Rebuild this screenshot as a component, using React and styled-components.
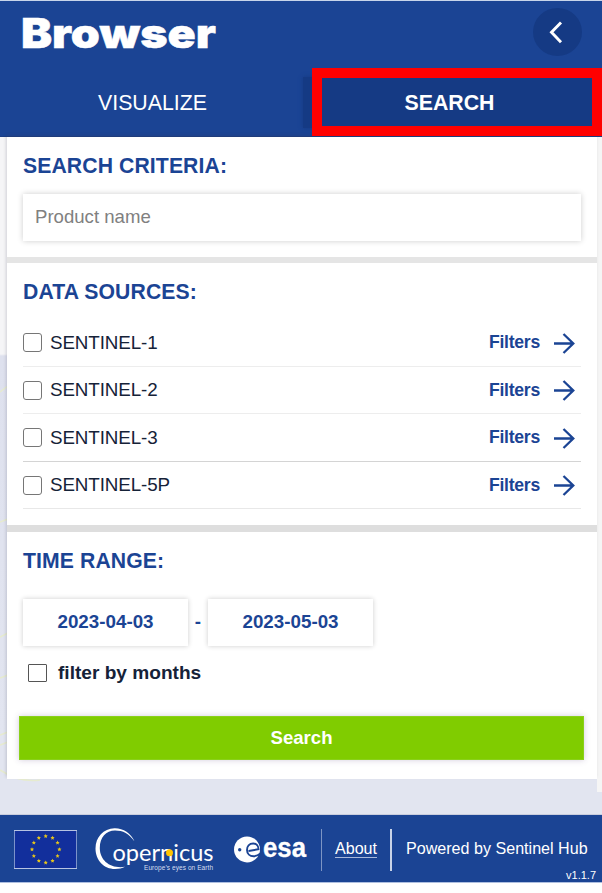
import React from 'react';
import styled, { createGlobalStyle } from 'styled-components';

const Global = createGlobalStyle`
  * { box-sizing: border-box; }
  body {
    margin: 0;
    background: #fff;
    font-family: "Liberation Sans", Arial, sans-serif;
    color: #152238;
  }
  h1, h2 { margin: 0; }
`;

const Page = styled.div`
  position: relative;
  width: 602px;
  height: 893px;
  overflow: hidden;
  display: flex;
  flex-direction: column;
`;

const Header = styled.header`
  height: 137px;
  flex: none;
  background: #1b4494;
  border-top: 1px solid #c8d5ea;
  border-bottom: 1px solid #1a3d84;
`;

const TitleBar = styled.div`
  height: 76px;
  display: flex;
  justify-content: space-between;
  padding: 7px 20px 0 21px;
`;

const Title = styled.h1`
  font: 900 41px/50px Inter, sans-serif;
  letter-spacing: 0;
  color: #fff;
  -webkit-text-stroke: 0.5px #fff;
  transform: scaleX(1.135);
  transform-origin: left;
`;

const CollapseButton = styled.button`
  width: 49px;
  height: 48px;
  padding: 0;
  border: 0;
  border-radius: 50%;
  background: #153a84;
`;

const Tabs = styled.nav`
  display: grid;
  grid-template-columns: 303px 1fr;
  height: 51px;
`;

const Tab = styled.div`
  display: flex;
  align-items: center;
  justify-content: center;
  padding: ${(p) => (p.$active ? '1px 6px 0 0' : '1px 0 0 2px')};
  font-size: 21.3px;
  font-weight: ${(p) => (p.$active ? 700 : 400)};
  color: #fff;
  background: ${(p) => (p.$active ? '#153a84' : 'transparent')};
  box-shadow: ${(p) => (p.$active ? '0 0 4px #153a84' : 'none')};
`;

const Highlight = styled.div`
  position: absolute;
  left: 312px;
  top: 68px;
  width: 290px;
  height: 68px;
  border: 10px solid #ff0000;
`;

const Body = styled.main`
  position: relative;
  flex: none;
  height: 678px;
  padding: 0 5px 0 7px;
  border-bottom: 1px solid #c9cddd;
  background: linear-gradient(#f5f5f7 0 217px, #dee1ee 219px, #e2e5f0 600px);
`;

const Backdrop = styled.svg`
  position: absolute;
  left: 0;
  top: 0;
`;

const RightRail = styled.div`
  position: absolute;
  right: 0;
  top: 0;
  width: 5px;
  height: 655px;
  background: #f5f5f5;
`;

const Panels = styled.div`
  position: relative;
  display: flex;
  flex-direction: column;
  box-shadow: -1px -2px 3px rgba(60, 60, 80, 0.2);
`;

const Panel = styled.section`
  height: ${(p) => p.$height}px;
  padding: ${(p) => p.$top}px 16px 0;
  background: #fff;
  border-bottom: ${(p) => p.$gap || 0}px solid ${(p) => p.$line || 'transparent'};
`;

const PanelTitle = styled.h2`
  height: 24px;
  font-size: 21.2px;
  line-height: 24px;
  letter-spacing: 0.1px;
  color: #1b4494;
`;

const SearchField = styled.input`
  display: block;
  width: 558px;
  height: 47px;
  margin-top: 16px;
  padding: 0 12px 1px;
  border: 0;
  background: #fff;
  font: 18.6px "Liberation Sans", Arial, sans-serif;
  box-shadow: 0 0 6px rgba(0, 0, 0, 0.2);
  &::placeholder { color: #808080; opacity: 1; }
`;

const SourceList = styled.div`
  margin-top: 15px;
`;

const SourceRow = styled.div`
  width: 558px;
  height: ${(p) => p.$height}px;
  display: flex;
  align-items: center;
  border-bottom: 1px solid ${(p) => p.$line};
`;

const Check = styled.span`
  width: 19px;
  height: ${(p) => (p.$square ? 18 : 19)}px;
  border: 1px solid ${(p) => (p.$square ? '#555' : '#767676')};
  border-radius: ${(p) => (p.$square ? 1 : 3)}px;
  background: #fff;
`;

const SourceName = styled.span`
  flex: 1;
  margin-left: 8px;
  font-size: 18.8px;
  letter-spacing: -0.1px;
  line-height: 22px;
`;

const Filters = styled.span`
  display: flex;
  align-items: center;
  gap: 13px;
  padding-right: 6px;
  font-size: 17.6px;
  letter-spacing: -0.25px;
  font-weight: 700;
  line-height: 22px;
  color: #1b4494;
`;

const FiltersLabel = styled.span`
  padding-bottom: 1px;
`;

const DateRow = styled.div`
  display: flex;
  align-items: center;
  height: 47px;
  margin-top: 26px;
  color: #1b4494;
  font-size: 18.8px;
  font-weight: 700;
`;

const DateField = styled.div`
  width: 165px;
  height: 47px;
  line-height: 45px;
  text-align: center;
  box-shadow: 0 0 5px rgba(0, 0, 0, 0.2);
`;

const Dash = styled.span`
  width: 20px;
  padding-bottom: 2px;
  text-align: center;
`;

const MonthRow = styled.div`
  display: flex;
  align-items: center;
  gap: 11px;
  height: 28px;
  margin: 13px 0 0 5px;
  font-size: 19.1px;
  font-weight: 700;
`;

const SearchButton = styled.button`
  display: block;
  width: 565px;
  height: 44px;
  margin: 29px 0 0 -4px;
  padding: 0;
  border: 1px solid #8ad01b;
  background: #80cc00;
  color: #fff;
  font: 700 18.6px "Liberation Sans", Arial, sans-serif;
  box-shadow: 0 0 6px rgba(80, 50, 120, 0.25);
`;

const Footer = styled.footer`
  position: relative;
  flex: none;
  height: 68px;
  display: flex;
  background: #1b4494;
  border-bottom: 1px solid #aebfe0;
  color: #fff;
  font-size: 16.1px;
`;

const Logos = styled.svg`
  flex: none;
  width: 321px;
  height: 67px;
`;

const AboutCell = styled.div`
  width: 71px;
  height: 42px;
  margin-top: 14px;
  padding-top: 10px;
  border-left: 1px solid #7d95c4;
  border-right: 2px solid #c8d3e8;
  text-align: center;
`;

const About = styled.a`
  display: inline-block;
  height: 19px;
  line-height: 19px;
  border-bottom: 1px solid #a9b9da;
`;

const Powered = styled.div`
  margin: 24px 0 0 14px;
  line-height: 19px;
  white-space: nowrap;
`;

const Version = styled.div`
  position: absolute;
  right: 6px;
  bottom: 0;
  font-size: 11px;
  line-height: 13px;
`;

const sources = [
  { name: 'SENTINEL-1', height: 48, line: '#ededed' },
  { name: 'SENTINEL-2', height: 47, line: '#ededed' },
  { name: 'SENTINEL-3', height: 48, line: '#d4d4d4' },
  { name: 'SENTINEL-5P', height: 47, line: '#e8e8e8' },
];

const stars = Array.from({ length: 12 }, (_, i) => {
  const a = (i * Math.PI) / 6;
  return [45.7 + 13.7 * Math.sin(a), 34.4 - 13.2 * Math.cos(a)];
});

const starPoints = (cx, cy) =>
  Array.from({ length: 10 }, (_, k) => {
    const r = k % 2 ? 1.05 : 2.2;
    const a = (k * Math.PI) / 5;
    return `${cx + r * Math.sin(a)},${cy - r * Math.cos(a)}`;
  }).join(' ');

function Arrow() {
  return (
    <svg width="22" height="22" viewBox="0 0 22 22" fill="none" stroke="#1b4494" strokeWidth="2.3">
      <path d="M1 11.5H20.3M10.5 2L20.3 11.5L10.5 21" />
    </svg>
  );
}

function FooterLogos() {
  return (
    <Logos viewBox="0 0 321 67">
      <rect x="14.5" y="15.5" width="62" height="38" fill="#122f9c" stroke="#7d93ca" />
      <path d="M14 15.5H77M14 53.5H77" stroke="#b7c3e2" />
      {stars.map(([x, y], i) => (
        <polygon key={i} points={starPoints(x, y)} fill="#e6c51b" />
      ))}
      <path
        d="M134.5 26.5C131 18 123 13 114.5 13.2C103.5 13.5 95.5 22 95.5 33.5C95.5 45.5 104 54 115 54C119 54 122 53.2 125 51.8C111 54 99.8 46 99.8 33C99.8 22 106 15.500 115 15.500C123 15.500 129 18.5 134.5 26.5Z"
        fill="#fff"
      />
      <text x="112.5" y="45.7" fontSize="23.5" fontFamily="Lato, sans-serif" fill="#fff" textLength="101" lengthAdjust="spacingAndGlyphs">opernicus</text>
      <circle cx="169.5" cy="37.800" r="3.5" fill="#ffc400" />
      <text x="144" y="54.800" fontSize="6.5" fill="#d5def0" textLength="69" lengthAdjust="spacing">Europe’s eyes on Earth</text>
      <circle cx="247" cy="34.4" r="13" fill="#fff" />
      <path d="M248.500 36L258.500 34.300C258.500 30.500 256 28.500 253.200 28.500C249.200 28.500 247 31.500 247 35C247 39 250 41.300 253.500 41.300C256 41.300 258.500 40.300 260.500 38.500" fill="none" stroke="#1b4494" strokeWidth="1.900" />
      <circle cx="239.7" cy="34.7" r="1.7" fill="#1b4494" />
      <text x="263" y="41.800" fontSize="27" fontWeight="700" fill="#fff" stroke="#fff" strokeWidth="0.300" textLength="43" lengthAdjust="spacingAndGlyphs">esa</text>
    </Logos>
  );
}

export default function App() {
  return (
    <Page>
      <Global />
      <Header>
        <TitleBar>
          <Title>Browser</Title>
          <CollapseButton aria-label="Collapse">
            <svg width="49" height="48" viewBox="0 0 49 48" fill="none" stroke="#fff" strokeWidth="2.9">
              <path d="M28 14.5L18.5 24.3L28 34.2" />
            </svg>
          </CollapseButton>
        </TitleBar>
        <Tabs>
          <Tab>VISUALIZE</Tab>
          <Tab $active>SEARCH</Tab>
        </Tabs>
      </Header>
      <Body>
        <Backdrop width="602" height="677" fill="none" stroke="#e6ebcf" strokeWidth="1.5">
          <path d="M0 255L8 249M0 385L8 382M0 500L8 496M0 541L8 538M0 598L8 595M0 608L8 605M0 633Q20 646 40 643" />
        </Backdrop>
        <RightRail />
        <Panels>
          <Panel $height={126} $top={17} $gap={6} $line="#e5e5e5">
            <PanelTitle>SEARCH CRITERIA:</PanelTitle>
            <SearchField placeholder="Product name" />
          </Panel>
          <Panel $height={269} $top={17} $gap={7} $line="#dedede">
            <PanelTitle>DATA SOURCES:</PanelTitle>
            <SourceList>
              {sources.map((s) => (
                <SourceRow key={s.name} $height={s.height} $line={s.line}>
                  <Check />
                  <SourceName>{s.name}</SourceName>
                  <Filters>
                    <FiltersLabel>Filters</FiltersLabel>
                    <Arrow />
                  </Filters>
                </SourceRow>
              ))}
            </SourceList>
          </Panel>
          <Panel $height={247} $top={17}>
            <PanelTitle>TIME RANGE:</PanelTitle>
            <DateRow>
              <DateField>2023-04-03</DateField>
              <Dash>-</Dash>
              <DateField>2023-05-03</DateField>
            </DateRow>
            <MonthRow>
              <Check $square />
              filter by months
            </MonthRow>
            <SearchButton>Search</SearchButton>
          </Panel>
        </Panels>
      </Body>
      <Footer>
        <FooterLogos />
        <AboutCell>
          <About>About</About>
        </AboutCell>
        <Powered>Powered by Sentinel Hub</Powered>
        <Version>v1.1.7</Version>
      </Footer>
      <Highlight />
    </Page>
  );
}
